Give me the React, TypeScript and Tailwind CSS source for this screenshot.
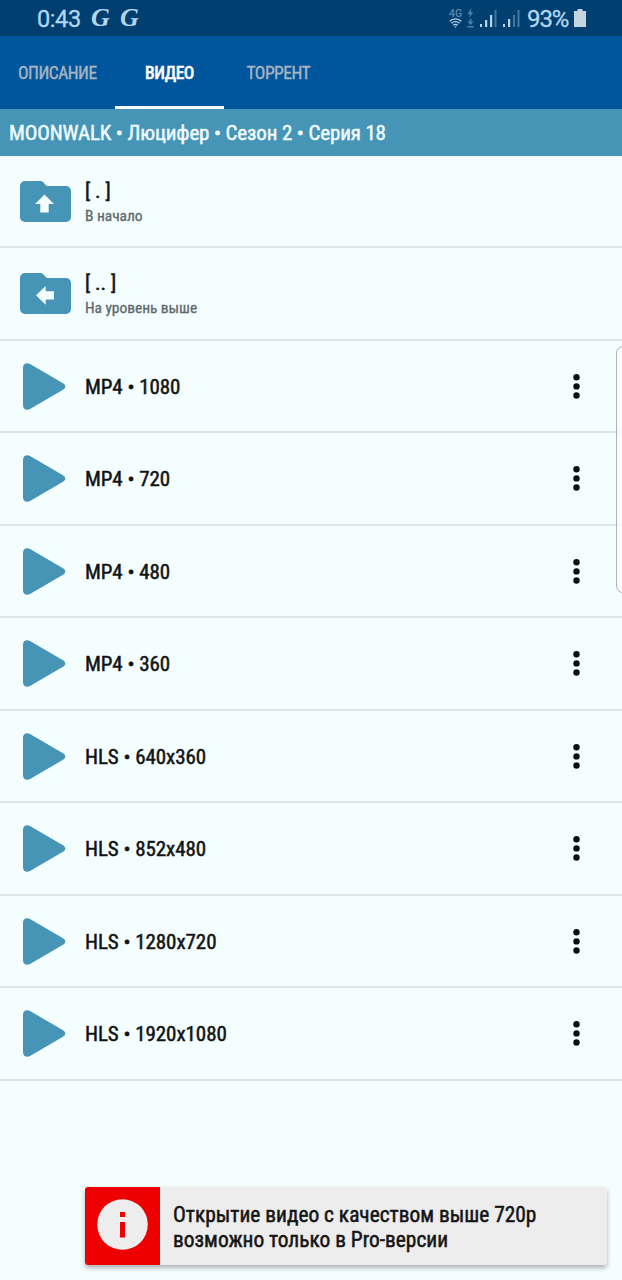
type Stream = {
  id: number;
  title: string;
};

const streams: Stream[] = [
  { id: 1, title: 'MP4 • 1080' },
  { id: 2, title: 'MP4 • 720' },
  { id: 3, title: 'MP4 • 480' },
  { id: 4, title: 'MP4 • 360' },
  { id: 5, title: 'HLS • 640x360' },
  { id: 6, title: 'HLS • 852x480' },
  { id: 7, title: 'HLS • 1280x720' },
  { id: 8, title: 'HLS • 1920x1080' },
];

function StatusBar() {
  return (
    <div className="flex h-9 items-center bg-[#003f6f] pr-9 pl-[37px] text-[#b5d6f0] [font-stretch:100%]">
      <span className="w-[44px] pt-px font-['Roboto',sans-serif] text-[23.5px] leading-9 tracking-[-0.4px] whitespace-nowrap [-webkit-text-stroke:0.3px]">0:43</span>
      <span className="ml-[10px] w-[20px] font-['Liberation_Serif',serif] text-[26px] leading-9 font-bold italic">G</span>
      <span className="ml-[9px] w-[20px] font-['Liberation_Serif',serif] text-[26px] leading-9 font-bold italic">G</span>
      <div className="ml-auto flex items-center">
        <div className="flex w-[15px] flex-col items-center">
          <span className="font-['Roboto',sans-serif] text-[10.5px] leading-[9px] font-medium text-[#5b8bb0]">4G</span>
          <svg width="13" height="10" viewBox="0 0 13 10" fill="none" stroke="currentColor" strokeWidth="1.3">
            <path d="M0.7 3.3a8.2 8.2 0 0 1 11.6 0M2.5 5.3a5.6 5.6 0 0 1 8 0M4.3 7.2a3.1 3.1 0 0 1 4.4 0" />
            <path d="M5.3 8.2L6.5 9.8 7.7 8.2z" fill="currentColor" stroke="none" />
          </svg>
        </div>
        <svg className="ml-[4px]" width="7" height="20" viewBox="0 0 7 20" fill="#5081a8">
          <path d="M4.5 0L0.5 6h2.4L2 10l4.2-5.8H3.8z" />
          <path d="M2.6 11h1.8v2.5H6.6L3.5 17 0.4 13.5h2.2zM0.3 18h6.4v1.5H0.3z" />
        </svg>
        <svg className="mt-[2px] ml-[6px]" width="17" height="18" viewBox="0 0 17 18" fill="currentColor">
          <path d="M0 14h2v3H0zM5 10h2.2v7H5zM10 5h2.2v12H10z" />
          <path d="M14.5 0h2v17h-2z" fill="#4478a1" />
        </svg>
        <svg className="mt-[2px] ml-[6px]" width="17" height="18" viewBox="0 0 17 18" fill="currentColor">
          <path d="M0 14h2v3H0zM5 9h2.2v8H5z" />
          <path d="M10 5h2v12h-2zM14.5 0h2v17h-2z" fill="#4478a1" />
        </svg>
        <span className="ml-[7px] w-[43px] pt-px font-['Roboto',sans-serif] text-[24px] leading-9 tracking-[-1.1px] whitespace-nowrap [-webkit-text-stroke:0.3px]">93%</span>
        <svg className="ml-[4px]" width="12" height="18" viewBox="0 0 12 18" fill="#c4d5df">
          <path d="M3.5 0h5v2H12v16H0V2h3.5z" />
        </svg>
      </div>
    </div>
  );
}

function FolderIcon({ direction }: { direction: 'up' | 'left' }) {
  return (
    <svg className="mt-px ml-5 shrink-0" width="51" height="41" viewBox="0 0 51 41">
      <path
        d="M5 0H20.5Q22 0 23 1.1L26.8 5H46A5 5 0 0 1 51 10V36A5 5 0 0 1 46 41H5A5 5 0 0 1 0 36V5A5 5 0 0 1 5 0Z"
        fill="#4694b6"
      />
      {direction === 'up' ? (
        <path d="M24.5 13.5L34 23H28.7V31.5H20.3V23H15Z" fill="#f5feff" />
      ) : (
        <path d="M16 22.3L25.7 13V18.2H34V26.4H25.7V31.7Z" fill="#f5feff" />
      )}
    </svg>
  );
}

function FolderRow({ direction, title, subtitle }: { direction: 'up' | 'left'; title: string; subtitle: string }) {
  return (
    <div className="flex h-[92.5px] items-center border-b-2 border-[#dce6e9]">
      <FolderIcon direction={direction} />
      <div className="mt-[5px] ml-[14px] flex flex-col">
        <span className="text-[21px] leading-[26px] text-[#101415] [-webkit-text-stroke:0.5px]">{title}</span>
        <span className="text-[15.5px] leading-[25px] tracking-[-0.05px] text-[#60686b] [-webkit-text-stroke:0.3px]">{subtitle}</span>
      </div>
    </div>
  );
}

function StreamRow({ stream }: { stream: Stream }) {
  return (
    <div className="flex h-[92.5px] items-center border-b-2 border-[#dce6e9] pt-px">
      <svg className="ml-[23px] shrink-0" width="43" height="47" viewBox="0 0 43 47" fill="#4694b6">
        <path d="M0 4.5C0 0.5 4 -0.8 7 1L40 20.2C43 22 43 25 40 26.8L7 46C4 47.8 0 46.5 0 42.5Z" />
      </svg>
      <span className="mt-px ml-[19px] text-[21px] leading-[26px] tracking-[-0.07px] text-[#101415] [-webkit-text-stroke:0.5px]">{stream.title}</span>
      <button className="mr-[42px] ml-auto">
        <svg width="7" height="25" viewBox="0 0 7 25" fill="#0b0f10">
          <circle cx="3.5" cy="3.3" r="3.2" />
          <circle cx="3.5" cy="12.4" r="3.2" />
          <circle cx="3.5" cy="21.5" r="3.2" />
        </svg>
      </button>
    </div>
  );
}

function App() {
  return (
    <div className="relative flex h-[1280px] w-[622px] flex-col overflow-hidden bg-[#f5feff] font-['Roboto_Condensed','Roboto',sans-serif] [font-stretch:75%]">
      <StatusBar />

      {/* Tabs */}
      <div className="flex h-[73px] bg-[#00569c] text-[17.5px] tracking-[-0.5px] text-[#a9b5c0] [-webkit-text-stroke:0.35px]">
        <div className="flex w-[115px] items-center pt-[2px] pl-[18px]">ОПИСАНИЕ</div>
        <div className="flex w-[109px] items-center justify-center border-b-[3px] border-[#f5feff] pt-[5px] font-medium text-white">
          ВИДЕО
        </div>
        <div className="flex items-center pt-[2px] pl-[22.5px]">ТОРРЕНТ</div>
      </div>

      {/* Current path */}
      <div className="flex h-[46.5px] items-center bg-[#4694b6] pt-[3px] pl-[9px] text-[21px] tracking-[-0.14px] text-[#eefaff] [-webkit-text-stroke:0.5px]">
        <span>MOONWALK • Люцифер • Сезон 2 • Серия 18</span>
      </div>

      <FolderRow direction="up" title="[ . ]" subtitle="В начало" />
      <FolderRow direction="left" title="[ .. ]" subtitle="На уровень выше" />
      {streams.map((stream) => (
        <StreamRow key={stream.id} stream={stream} />
      ))}

      {/* Edge panel handle */}
      <div className="absolute top-[346px] left-[616px] h-[247px] w-5 rounded-[7px] border border-[#aab3b6] bg-[#fafcff]/80"></div>

      {/* Toast */}
      <div className="absolute top-[1187px] left-[85px] flex h-[78px] w-[522px] overflow-hidden rounded-[3px] bg-[#ededed] shadow-[0_3px_5px_rgba(0,0,0,0.3)]">
        <div className="flex w-[75px] items-center justify-center bg-[#ee0000] pb-[3px]">
          <svg width="51" height="51" viewBox="0 0 51 51">
            <circle cx="25.5" cy="25.5" r="25.3" fill="#ededed" />
            <path d="M23 13h5v5h-5zM23 23h5v15.5h-5z" fill="#ee0000" />
          </svg>
        </div>
        <div className="flex flex-col justify-center pt-[2px] pl-[13px] text-[21.4px] leading-[25.5px] text-[#151515] [-webkit-text-stroke:0.5px]">
          <span>Открытие видео с качеством выше 720p</span>
          <span>возможно только в Pro-версии</span>
        </div>
      </div>
    </div>
  );
}

export default App;
